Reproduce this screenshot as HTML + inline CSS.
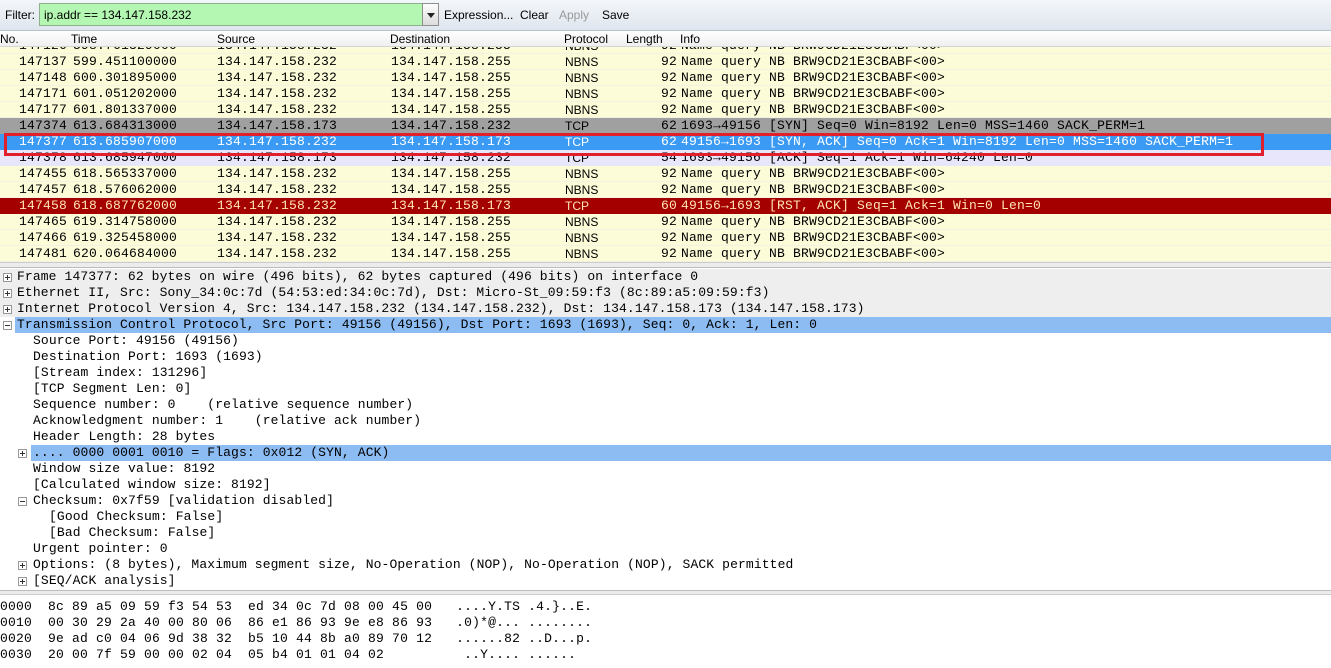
<!DOCTYPE html>
<html><head><meta charset="utf-8"><style>
*{margin:0;padding:0;box-sizing:border-box}
body{width:1331px;height:668px;overflow:hidden;background:#fff;position:relative;font-family:"Liberation Mono",monospace;font-size:13px;color:#000}
.abs{position:absolute}
.tb{left:0;top:0;width:1331px;height:31px;background:linear-gradient(#f3f6fa,#dfe6ee);border-bottom:1px solid #b8c2cc}
.sans{font-family:"Liberation Sans",sans-serif;font-size:12px}
.hdr{left:0;top:31px;width:1331px;height:16px;background:linear-gradient(#fff,#f0f0f0);border-bottom:1px solid #d5d5d5}
.hdr span{position:absolute;top:1px}
.list{left:0;top:47px;width:1331px;height:215px;overflow:hidden;letter-spacing:.2px}
.r{position:absolute;left:0;width:1331px;height:16px;line-height:16px;white-space:pre;background:#fcfcd9;border-bottom:1px solid #f2f2e0}
.r span{position:absolute;top:0}
.c1{left:19px}.c2{left:73px}.c3{left:217px}.c4{left:391px}.c5{left:565px;font-family:"Liberation Sans",sans-serif;font-size:12px;letter-spacing:0}.c6{left:661px}.c7{left:681px}
.d{position:absolute;left:0;width:1331px;height:16px;line-height:16px;white-space:pre;letter-spacing:.12px}
.pm{position:absolute;width:9px;height:9px;border:1px solid #999;background:#fff;top:4px}
.pm:before{content:"";position:absolute;left:1px;top:3px;width:5px;height:1px;background:#333}
.pm.p:after{content:"";position:absolute;left:3px;top:1px;width:1px;height:5px;background:#333}
.hex{left:0;top:599px;font-size:13px;letter-spacing:.2px;line-height:16px;white-space:pre}
</style></head><body>
<div class="abs tb"></div>
<div class="abs sans" style="left:5px;top:8px">Filter:</div>
<div class="abs sans" style="left:39px;top:3px;width:384px;height:23px;background:#b3f7b3;border:1px solid #8fb08f;padding:4px 0 0 4px">ip.addr == 134.147.158.232</div>
<div class="abs" style="left:422px;top:3px;width:17px;height:23px;background:linear-gradient(#fdfdfd,#dcdcdc);border:1px solid #8f8f8f"><div style="position:absolute;left:4px;top:9px;border-left:4px solid transparent;border-right:4px solid transparent;border-top:5px solid #222"></div></div>
<div class="abs sans" style="left:444px;top:8px">Expression...</div>
<div class="abs sans" style="left:520px;top:8px">Clear</div>
<div class="abs sans" style="left:559px;top:8px;color:#999">Apply</div>
<div class="abs sans" style="left:602px;top:8px">Save</div>
<div class="abs hdr sans"><span style="left:0">No.</span><span style="left:71px">Time</span><span style="left:217px">Source</span><span style="left:390px">Destination</span><span style="left:564px">Protocol</span><span style="left:626px">Length</span><span style="left:680px">Info</span></div>
<div class="abs list">
<div class="r" style="top:-9px"><span class="c1">147126</span><span class="c2">598.761329000</span><span class="c3">134.147.158.232</span><span class="c4">134.147.158.255</span><span class="c5">NBNS</span><span class="c6">92</span><span class="c7">Name query NB BRW9CD21E3CBABF&lt;00&gt;</span></div>
<div class="r" style="top:7px"><span class="c1">147137</span><span class="c2">599.451100000</span><span class="c3">134.147.158.232</span><span class="c4">134.147.158.255</span><span class="c5">NBNS</span><span class="c6">92</span><span class="c7">Name query NB BRW9CD21E3CBABF&lt;00&gt;</span></div>
<div class="r" style="top:23px"><span class="c1">147148</span><span class="c2">600.301895000</span><span class="c3">134.147.158.232</span><span class="c4">134.147.158.255</span><span class="c5">NBNS</span><span class="c6">92</span><span class="c7">Name query NB BRW9CD21E3CBABF&lt;00&gt;</span></div>
<div class="r" style="top:39px"><span class="c1">147171</span><span class="c2">601.051202000</span><span class="c3">134.147.158.232</span><span class="c4">134.147.158.255</span><span class="c5">NBNS</span><span class="c6">92</span><span class="c7">Name query NB BRW9CD21E3CBABF&lt;00&gt;</span></div>
<div class="r" style="top:55px"><span class="c1">147177</span><span class="c2">601.801337000</span><span class="c3">134.147.158.232</span><span class="c4">134.147.158.255</span><span class="c5">NBNS</span><span class="c6">92</span><span class="c7">Name query NB BRW9CD21E3CBABF&lt;00&gt;</span></div>
<div class="r" style="top:71px;background:#a0a0a0;border-color:#a0a0a0"><span class="c1">147374</span><span class="c2">613.684313000</span><span class="c3">134.147.158.173</span><span class="c4">134.147.158.232</span><span class="c5">TCP</span><span class="c6">62</span><span class="c7">1693→49156 [SYN] Seq=0 Win=8192 Len=0 MSS=1460 SACK_PERM=1</span></div>
<div class="r" style="top:87px;background:#3b9af3;color:#fff;border-color:#3b9af3"><span class="c1">147377</span><span class="c2">613.685907000</span><span class="c3">134.147.158.232</span><span class="c4">134.147.158.173</span><span class="c5">TCP</span><span class="c6">62</span><span class="c7">49156→1693 [SYN, ACK] Seq=0 Ack=1 Win=8192 Len=0 MSS=1460 SACK_PERM=1</span></div>
<div class="r" style="top:103px;background:#e7e6fa;border-color:#e7e6fa"><span class="c1">147378</span><span class="c2">613.685947000</span><span class="c3">134.147.158.173</span><span class="c4">134.147.158.232</span><span class="c5">TCP</span><span class="c6">54</span><span class="c7">1693→49156 [ACK] Seq=1 Ack=1 Win=64240 Len=0</span></div>
<div class="r" style="top:119px"><span class="c1">147455</span><span class="c2">618.565337000</span><span class="c3">134.147.158.232</span><span class="c4">134.147.158.255</span><span class="c5">NBNS</span><span class="c6">92</span><span class="c7">Name query NB BRW9CD21E3CBABF&lt;00&gt;</span></div>
<div class="r" style="top:135px"><span class="c1">147457</span><span class="c2">618.576062000</span><span class="c3">134.147.158.232</span><span class="c4">134.147.158.255</span><span class="c5">NBNS</span><span class="c6">92</span><span class="c7">Name query NB BRW9CD21E3CBABF&lt;00&gt;</span></div>
<div class="r" style="top:151px;background:#a40000;color:#ffe6b0;border-color:#a40000"><span class="c1">147458</span><span class="c2">618.687762000</span><span class="c3">134.147.158.232</span><span class="c4">134.147.158.173</span><span class="c5">TCP</span><span class="c6">60</span><span class="c7">49156→1693 [RST, ACK] Seq=1 Ack=1 Win=0 Len=0</span></div>
<div class="r" style="top:167px"><span class="c1">147465</span><span class="c2">619.314758000</span><span class="c3">134.147.158.232</span><span class="c4">134.147.158.255</span><span class="c5">NBNS</span><span class="c6">92</span><span class="c7">Name query NB BRW9CD21E3CBABF&lt;00&gt;</span></div>
<div class="r" style="top:183px"><span class="c1">147466</span><span class="c2">619.325458000</span><span class="c3">134.147.158.232</span><span class="c4">134.147.158.255</span><span class="c5">NBNS</span><span class="c6">92</span><span class="c7">Name query NB BRW9CD21E3CBABF&lt;00&gt;</span></div>
<div class="r" style="top:199px"><span class="c1">147481</span><span class="c2">620.064684000</span><span class="c3">134.147.158.232</span><span class="c4">134.147.158.255</span><span class="c5">NBNS</span><span class="c6">92</span><span class="c7">Name query NB BRW9CD21E3CBABF&lt;00&gt;</span></div>
</div>
<div class="abs" style="left:4px;top:133px;width:1260px;height:23px;border:3px solid #e0202c"></div>
<div class="abs" style="left:0;top:262px;width:1331px;height:6px;background:#ececec;border-top:1px solid #ccc;border-bottom:1px solid #bbb"></div>

<div class="d" style="top:269px;background:#eeeeee"><i class="pm p" style="left:3px"></i><span style="position:absolute;left:17px">Frame 147377: 62 bytes on wire (496 bits), 62 bytes captured (496 bits) on interface 0</span></div>
<div class="d" style="top:285px;background:#eeeeee"><i class="pm p" style="left:3px"></i><span style="position:absolute;left:17px">Ethernet II, Src: Sony_34:0c:7d (54:53:ed:34:0c:7d), Dst: Micro-St_09:59:f3 (8c:89:a5:09:59:f3)</span></div>
<div class="d" style="top:301px;background:#eeeeee"><i class="pm p" style="left:3px"></i><span style="position:absolute;left:17px">Internet Protocol Version 4, Src: 134.147.158.232 (134.147.158.232), Dst: 134.147.158.173 (134.147.158.173)</span></div>
<div class="d" style="top:317px"><i class="pm" style="left:3px"></i><span style="position:absolute;left:15px;right:0;background:#8cbcf2;padding-left:2px">Transmission Control Protocol, Src Port: 49156 (49156), Dst Port: 1693 (1693), Seq: 0, Ack: 1, Len: 0</span></div>
<div class="d" style="top:333px"><span style="position:absolute;left:33px">Source Port: 49156 (49156)</span></div>
<div class="d" style="top:349px"><span style="position:absolute;left:33px">Destination Port: 1693 (1693)</span></div>
<div class="d" style="top:365px"><span style="position:absolute;left:33px">[Stream index: 131296]</span></div>
<div class="d" style="top:381px"><span style="position:absolute;left:33px">[TCP Segment Len: 0]</span></div>
<div class="d" style="top:397px"><span style="position:absolute;left:33px">Sequence number: 0    (relative sequence number)</span></div>
<div class="d" style="top:413px"><span style="position:absolute;left:33px">Acknowledgment number: 1    (relative ack number)</span></div>
<div class="d" style="top:429px"><span style="position:absolute;left:33px">Header Length: 28 bytes</span></div>
<div class="d" style="top:445px"><i class="pm p" style="left:18px"></i><span style="position:absolute;left:31px;right:0;background:#8cbcf2;padding-left:2px">.... 0000 0001 0010 = Flags: 0x012 (SYN, ACK)</span></div>
<div class="d" style="top:461px"><span style="position:absolute;left:33px">Window size value: 8192</span></div>
<div class="d" style="top:477px"><span style="position:absolute;left:33px">[Calculated window size: 8192]</span></div>
<div class="d" style="top:493px"><i class="pm" style="left:18px"></i><span style="position:absolute;left:33px">Checksum: 0x7f59 [validation disabled]</span></div>
<div class="d" style="top:509px"><span style="position:absolute;left:49px">[Good Checksum: False]</span></div>
<div class="d" style="top:525px"><span style="position:absolute;left:49px">[Bad Checksum: False]</span></div>
<div class="d" style="top:541px"><span style="position:absolute;left:33px">Urgent pointer: 0</span></div>
<div class="d" style="top:557px"><i class="pm p" style="left:18px"></i><span style="position:absolute;left:33px">Options: (8 bytes), Maximum segment size, No-Operation (NOP), No-Operation (NOP), SACK permitted</span></div>
<div class="d" style="top:573px"><i class="pm p" style="left:18px"></i><span style="position:absolute;left:33px">[SEQ/ACK analysis]</span></div>
<div class="abs" style="left:0;top:590px;width:1331px;height:5px;background:#ececec;border-top:1px solid #bbb;border-bottom:1px solid #ccc"></div>
<div class="abs hex">0000  8c 89 a5 09 59 f3 54 53  ed 34 0c 7d 08 00 45 00   ....Y.TS .4.}..E.
0010  00 30 29 2a 40 00 80 06  86 e1 86 93 9e e8 86 93   .0)*@... ........
0020  9e ad c0 04 06 9d 38 32  b5 10 44 8b a0 89 70 12   ......82 ..D...p.
0030  20 00 7f 59 00 00 02 04  05 b4 01 01 04 02          ..Y.... ......</div>
</body></html>
